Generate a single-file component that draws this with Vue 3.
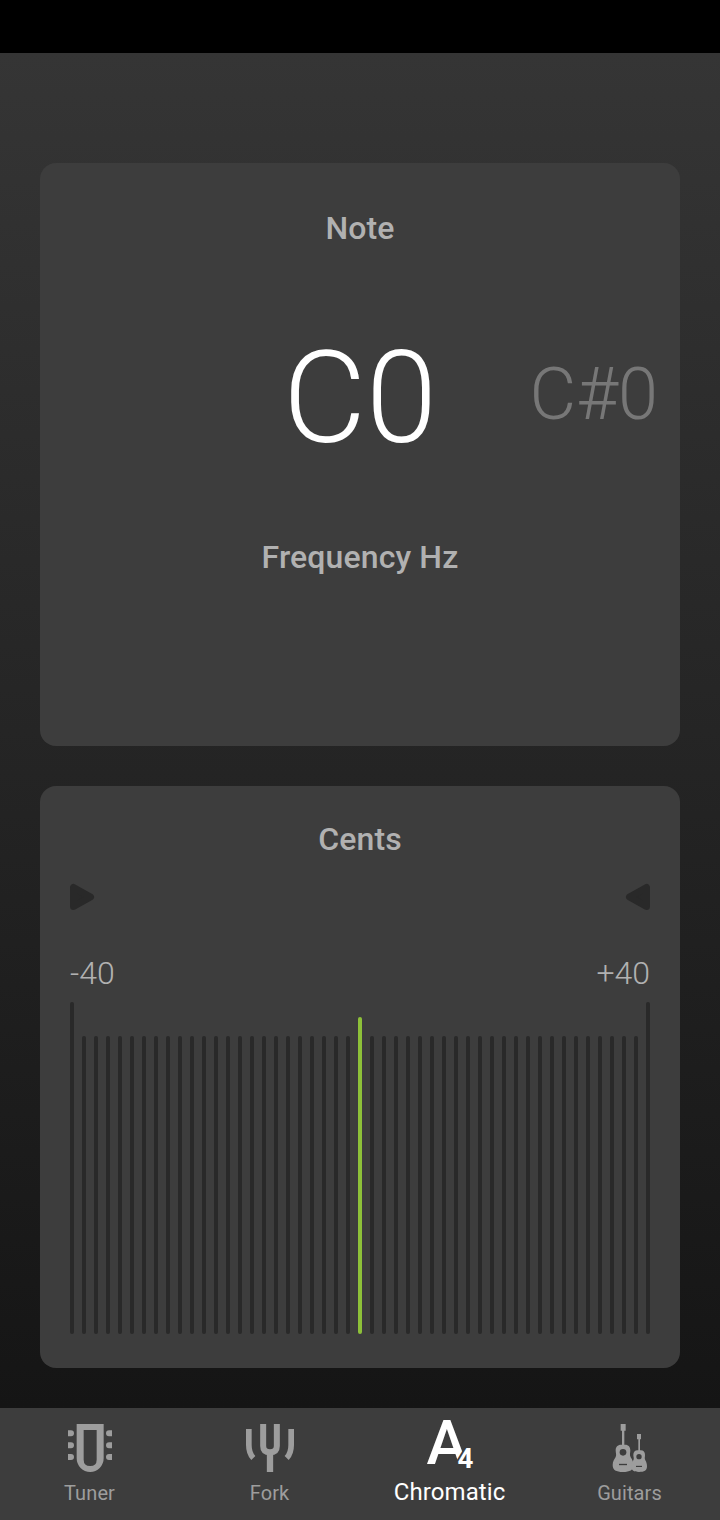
<script setup>
const bars = Array.from({ length: 49 }, (_, i) => ({
  id: i,
  edge: i === 0 || i === 48,
  center: i === 24
}))
</script>

<template>
  <div class="screen">
    <div class="status"></div>
    <main class="content">
      <section class="card note-card">
        <h2 class="title">Note</h2>
        <div class="notes">
          <span></span>
          <span class="note">C0</span>
          <span class="next">C#0</span>
        </div>
        <h2 class="title">Frequency Hz</h2>
      </section>
      <section class="card cents-card">
        <h2 class="title">Cents</h2>
        <div class="row arrows">
          <svg width="25" height="28" viewBox="0 0 25 28">
            <path d="M3.500 4.500 L3.500 23.500 L20.500 14 Z" fill="#292929" stroke="#292929" stroke-width="7" stroke-linejoin="round" />
          </svg>
          <svg width="25" height="28" viewBox="0 0 25 28">
            <path d="M21.500 4.500 L21.500 23.500 L4.500 14 Z" fill="#292929" stroke="#292929" stroke-width="7" stroke-linejoin="round" />
          </svg>
        </div>
        <div class="row range"><span>-40</span><span>+40</span></div>
        <div class="bars">
          <i v-for="b in bars" :key="b.id" class="bar" :class="{ edge: b.edge, center: b.center }"></i>
        </div>
      </section>
    </main>
    <nav class="tabs">
      <div class="tab">
        <svg class="icon" viewBox="48 57 144 144">
          <path fill-rule="evenodd" d="M80 57H161V160A40.500 41 0 0 1 80 160ZM101 75V164Q101 183 120.500 183Q140 183 140 164V75Z" />
          <path d="M54 76H63A9 9 0 0 1 63 94H54ZM54 112H63A9 9 0 0 1 63 130H54ZM54 147H63A9 9 0 0 1 63 165H54ZM186 76H177A9 9 0 0 0 177 94H186ZM186 112H177A9 9 0 0 0 177 130H186ZM186 147H177A9 9 0 0 0 177 165H186Z" />
        </svg>
        <span>Tuner</span>
      </div>
      <div class="tab">
        <svg class="icon" viewBox="48 57 144 144">
          <g fill="none" stroke="#9d9d9d" stroke-width="17">
            <path d="M99.500 57V123Q99.500 142 120 142Q140.500 142 140.500 123V57" stroke-width="18" />
            <path d="M120 140V201" stroke-width="19" />
            <path d="M56.500 72V120Q56.500 145 70 159" />
            <path d="M183.500 72V120Q183.500 145 170 159" />
          </g>
        </svg>
        <span>Fork</span>
      </div>
      <div class="tab active">
        <svg class="icon big" viewBox="0 0 58 58">
          <text x="5.500" y="44.500" font-size="61.500" font-weight="500">A</text>
          <text x="36.500" y="49" font-size="27.700" font-weight="700" stroke="#3d3d3d" stroke-width="4" paint-order="stroke">4</text>
        </svg>
        <span>Chromatic</span>
      </div>
      <div class="tab">
        <svg class="icon" viewBox="48 57 144 144">
          <path d="M92 57H107V77H103V119C115 118 121 125 121 136C121 145 118 149 122 157C126 163 130 169 130 180C130 195 120 201 99 201C78 201 68 195 68 180C68 169 73 163 77 156C80 149 77 145 77 136C77 125 83 118 96 119V77H92Z" />
          <path d="M141 87H153V103H150V136C160 135 165 141 165 150C165 157 163 160 166 166C169 171 171 176 171 184C171 197 163 201 147 201C132 201 124 197 124 184C124 176 127 171 130 166C133 160 130 157 130 150C130 141 135 135 145 136V103H141Z" />
          <g fill="#3d3d3d">
            <circle cx="99" cy="142" r="10" />
            <circle cx="147" cy="155" r="8" />
            <rect x="87" y="176.500" width="24" height="4" />
            <rect x="138" y="182.500" width="18" height="3.500" />
          </g>
        </svg>
        <span>Guitars</span>
      </div>
    </nav>
  </div>
</template>

<style>
body {
  margin: 0;
  background: #151515;
}
</style>

<style scoped>
.screen {
  width: 720px;
  height: 1520px;
  display: flex;
  flex-direction: column;
  overflow: hidden;
  font-family: Roboto, sans-serif;
}
.status {
  height: 53px;
  background: #000;
}
.content {
  flex: 1;
  box-sizing: border-box;
  padding: 110px 40px 40px;
  display: flex;
  flex-direction: column;
  gap: 40px;
  background: linear-gradient(#353535, #151515);
}
.card {
  box-sizing: border-box;
  background: #3d3d3d;
  border-radius: 16px;
  display: flex;
  flex-direction: column;
}
.note-card {
  height: 583px;
  padding-top: 46px;
}
.cents-card {
  height: 582px;
  padding: 34px 30px 0;
}
.title {
  margin: 0;
  text-align: center;
  font-size: 32px;
  line-height: 38px;
  font-weight: 500;
  letter-spacing: 0.12px;
  color: #b1b1b1;
}
.notes {
  height: 291px;
  display: grid;
  grid-template-columns: 1fr auto 1fr;
  align-items: center;
  font-weight: 300;
}
.note {
  font-size: 128px;
  line-height: 150px;
  margin-top: 10px;
  color: #fff;
}
.next {
  font-size: 72px;
  line-height: 84px;
  color: #777;
  justify-self: end;
  margin: 5px 22px 0 0;
}
.row {
  display: flex;
  justify-content: space-between;
}
.arrows {
  margin-top: 25px;
  height: 28px;
}
.range {
  margin-top: 43px;
  font-size: 32px;
  line-height: 38px;
  font-weight: 300;
  color: #b1b1b1;
}
.bars {
  margin-top: 10px;
  height: 332px;
  display: flex;
  align-items: flex-end;
  justify-content: space-between;
}
.bar {
  width: 4px;
  height: 298px;
  border-radius: 2px;
  background: #292929;
}
.bar.edge {
  height: 332px;
}
.bar.center {
  height: 317px;
  background: #8dc039;
}
.tabs {
  height: 112px;
  display: grid;
  grid-template-columns: repeat(4, 1fr);
  background: #3d3d3d;
}
.tab {
  box-sizing: border-box;
  padding-top: 16px;
  display: flex;
  flex-direction: column;
  align-items: center;
  color: #9d9d9d;
  font-size: 20px;
  line-height: 24px;
}
.tab span {
  margin: 9px 1px 0 0;
  letter-spacing: 0.1px;
}
.icon {
  width: 48px;
  height: 48px;
  fill: currentColor;
  overflow: visible;
}
.tab.active {
  padding-top: 11px;
  color: #fff;
  font-size: 24px;
  line-height: 28px;
}
.tab.active span {
  margin-top: 1px;
}
.icon.big {
  width: 58px;
  height: 58px;
}
</style>
